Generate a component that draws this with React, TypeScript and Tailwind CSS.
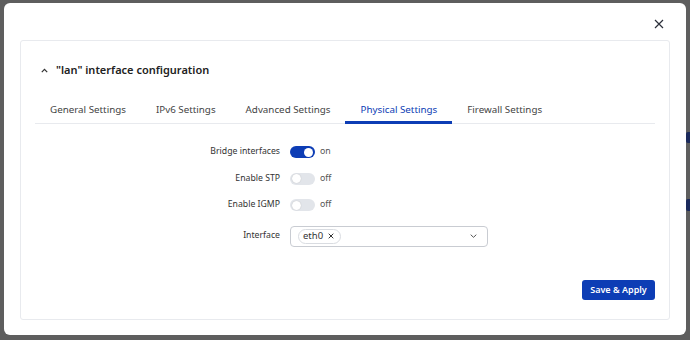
import React from "react";

function Toggle({ on }: { on: boolean }) {
  return (
    <div className="flex items-center gap-[5px]">
      <div
        className={
          on
            ? "relative h-[12px] w-[25px] rounded-full bg-[#0d3db5]"
            : "relative h-[12px] w-[25px] rounded-full bg-[#e2e5ea]"
        }
      >
        <div
          className={
            on
              ? "absolute right-[2px] top-[1.5px] h-[9px] w-[9px] rounded-full bg-white"
              : "absolute left-[1.5px] top-[1.5px] h-[9px] w-[9px] rounded-full bg-white shadow-[0_0_1px_rgba(0,0,0,0.25)]"
          }
        />
      </div>
      <span className="text-[8.8px] text-[#555]">{on ? "on" : "off"}</span>
    </div>
  );
}

function Row({ label, children }: { label: string; children: React.ReactNode }) {
  return (
    <div className="flex h-[14px] items-center">
      <div className="w-[255px] pr-[10px] text-right text-[8.7px] text-[#333]">{label}</div>
      {children}
    </div>
  );
}

export default function App() {
  const tabs = ["General Settings", "IPv6 Settings", "Advanced Settings", "Physical Settings", "Firewall Settings"];
  return (
    <div
      className="relative h-[340px] w-[690px] overflow-hidden bg-[#5e5e5e] pl-[4px] pt-[3px]"
      style={{ fontFamily: '"Noto Sans", "Open Sans", sans-serif' }}
    >
      <div className="absolute right-0 top-[132px] h-[11px] w-[4px] rounded-l-[2px] bg-[#1b2a5c]" />
      <div className="absolute right-0 top-[199px] h-[12px] w-[4px] rounded-l-[2px] bg-[#1b2a5c]" />
      <div className="relative flex h-[332px] w-[682px] flex-col rounded-[6px] bg-white px-[16px] pb-[15px] pt-[37px]">
        <button className="absolute right-[22px] top-[16px]">
          <svg width="10" height="10" viewBox="0 0 10 10">
            <path d="M1 1L9 9M9 1L1 9" stroke="#2b2f3a" strokeWidth="1.2" />
          </svg>
        </button>
        <div className="flex flex-1 flex-col rounded-[3px] border border-[#e8eaee] px-[14px]">
          <div className="mt-[21px] flex h-[16px] items-center gap-[8px] pl-[6px]">
            <svg width="7" height="5" viewBox="0 0 7 5">
              <path d="M0.8 4.2L3.5 1.3L6.2 4.2" stroke="#333" strokeWidth="1.2" fill="none" />
            </svg>
            <span className="text-[11px] font-semibold text-[#222]">"lan" interface configuration</span>
          </div>
          <div className="mt-[19px] flex border-b border-[#e8eaee]">
            {tabs.map((t) => (
              <div
                key={t}
                className={
                  t === "Physical Settings"
                    ? "-mb-px flex h-[27px] items-center border-b-[3px] border-[#0d3db5] px-[15px] pt-[3px] text-[9.8px] text-[#0d3db5]"
                    : "-mb-px flex h-[27px] items-center border-b-[3px] border-transparent px-[15px] pt-[3px] text-[9.8px] text-[#444]"
                }
              >
                {t}
              </div>
            ))}
          </div>
          <div className="mt-[21px] flex flex-col gap-[12.5px]">
            <Row label="Bridge interfaces">
              <Toggle on />
            </Row>
            <Row label="Enable STP">
              <Toggle on={false} />
            </Row>
            <Row label="Enable IGMP">
              <Toggle on={false} />
            </Row>
            <div className="mt-[1px] flex items-center">
              <div className="w-[255px] pr-[10px] text-right text-[8.7px] text-[#333]">Interface</div>
              <div className="flex h-[21px] w-[198px] items-center justify-between rounded-[4px] border border-[#c9ccd2] pl-[7px] pr-[10px]">
                <div className="flex h-[15px] items-center gap-[5px] rounded-full border border-[#d9dce1] pl-[4px] pr-[6px] text-[9.5px] text-[#333]">
                  <span>eth0</span>
                  <svg width="6" height="6" viewBox="0 0 6 6">
                    <path d="M0.7 0.7L5.3 5.3M5.3 0.7L0.7 5.3" stroke="#333" strokeWidth="1" />
                  </svg>
                </div>
                <svg width="7" height="4" viewBox="0 0 7 4">
                  <path d="M0.7 0.7L3.5 3.3L6.3 0.7" stroke="#555" strokeWidth="1" fill="none" />
                </svg>
              </div>
            </div>
          </div>
          <div className="mb-[19px] mt-auto flex justify-end">
            <button className="h-[20px] w-[73px] rounded-[3px] bg-[#0d3db5] text-[9px] font-semibold text-white">
              Save &amp; Apply
            </button>
          </div>
        </div>
      </div>
    </div>
  );
}
